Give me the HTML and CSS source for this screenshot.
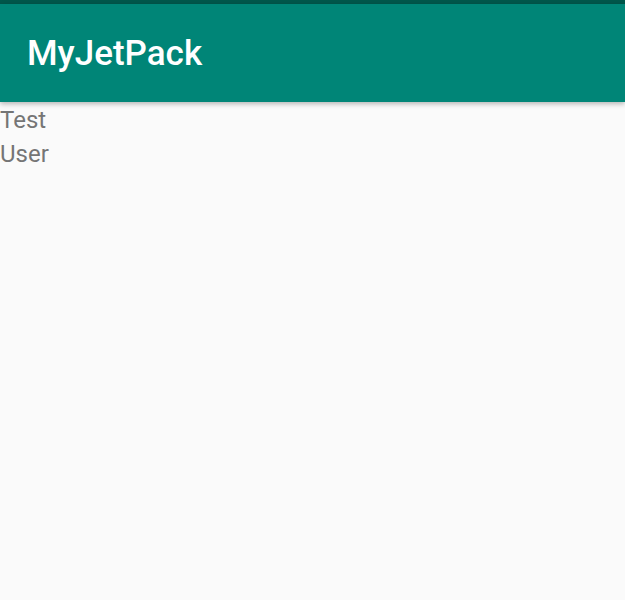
FILE: index.html
```html
<!DOCTYPE html>
<html>
<head>
  <meta charset="utf-8">
  <title>MyJetPack</title>
  <link rel="stylesheet" href="styles.css">
</head>
<body>
  <div class="status-bar"></div>
  <header class="toolbar">
    <h1 class="title">MyJetPack</h1>
  </header>
  <main class="content">
    <p class="line">Test</p>
    <p class="line">User</p>
  </main>
</body>
</html>
```

FILE: styles.css
```css
html, body {
  margin: 0;
  padding: 0;
  height: 100%;
}

body {
  background: #fafafa;
  font-family: Roboto, "Noto Sans", sans-serif;
}

.status-bar {
  height: 4px;
  background: #00574b;
}

.toolbar {
  position: relative;
  z-index: 1;
  height: 98px;
  display: flex;
  align-items: center;
  padding: 0 27px;
  background: #008577;
  box-shadow: 0 2px 5px rgba(0, 0, 0, 0.28);
}

.title {
  margin: 0;
  color: #fff;
  font-size: 35px;
  font-weight: 500;
}

.content {
  padding-top: 1px;
}

.line {
  margin: 0;
  color: #757575;
  font-size: 24px;
  line-height: 34px;
}
```
